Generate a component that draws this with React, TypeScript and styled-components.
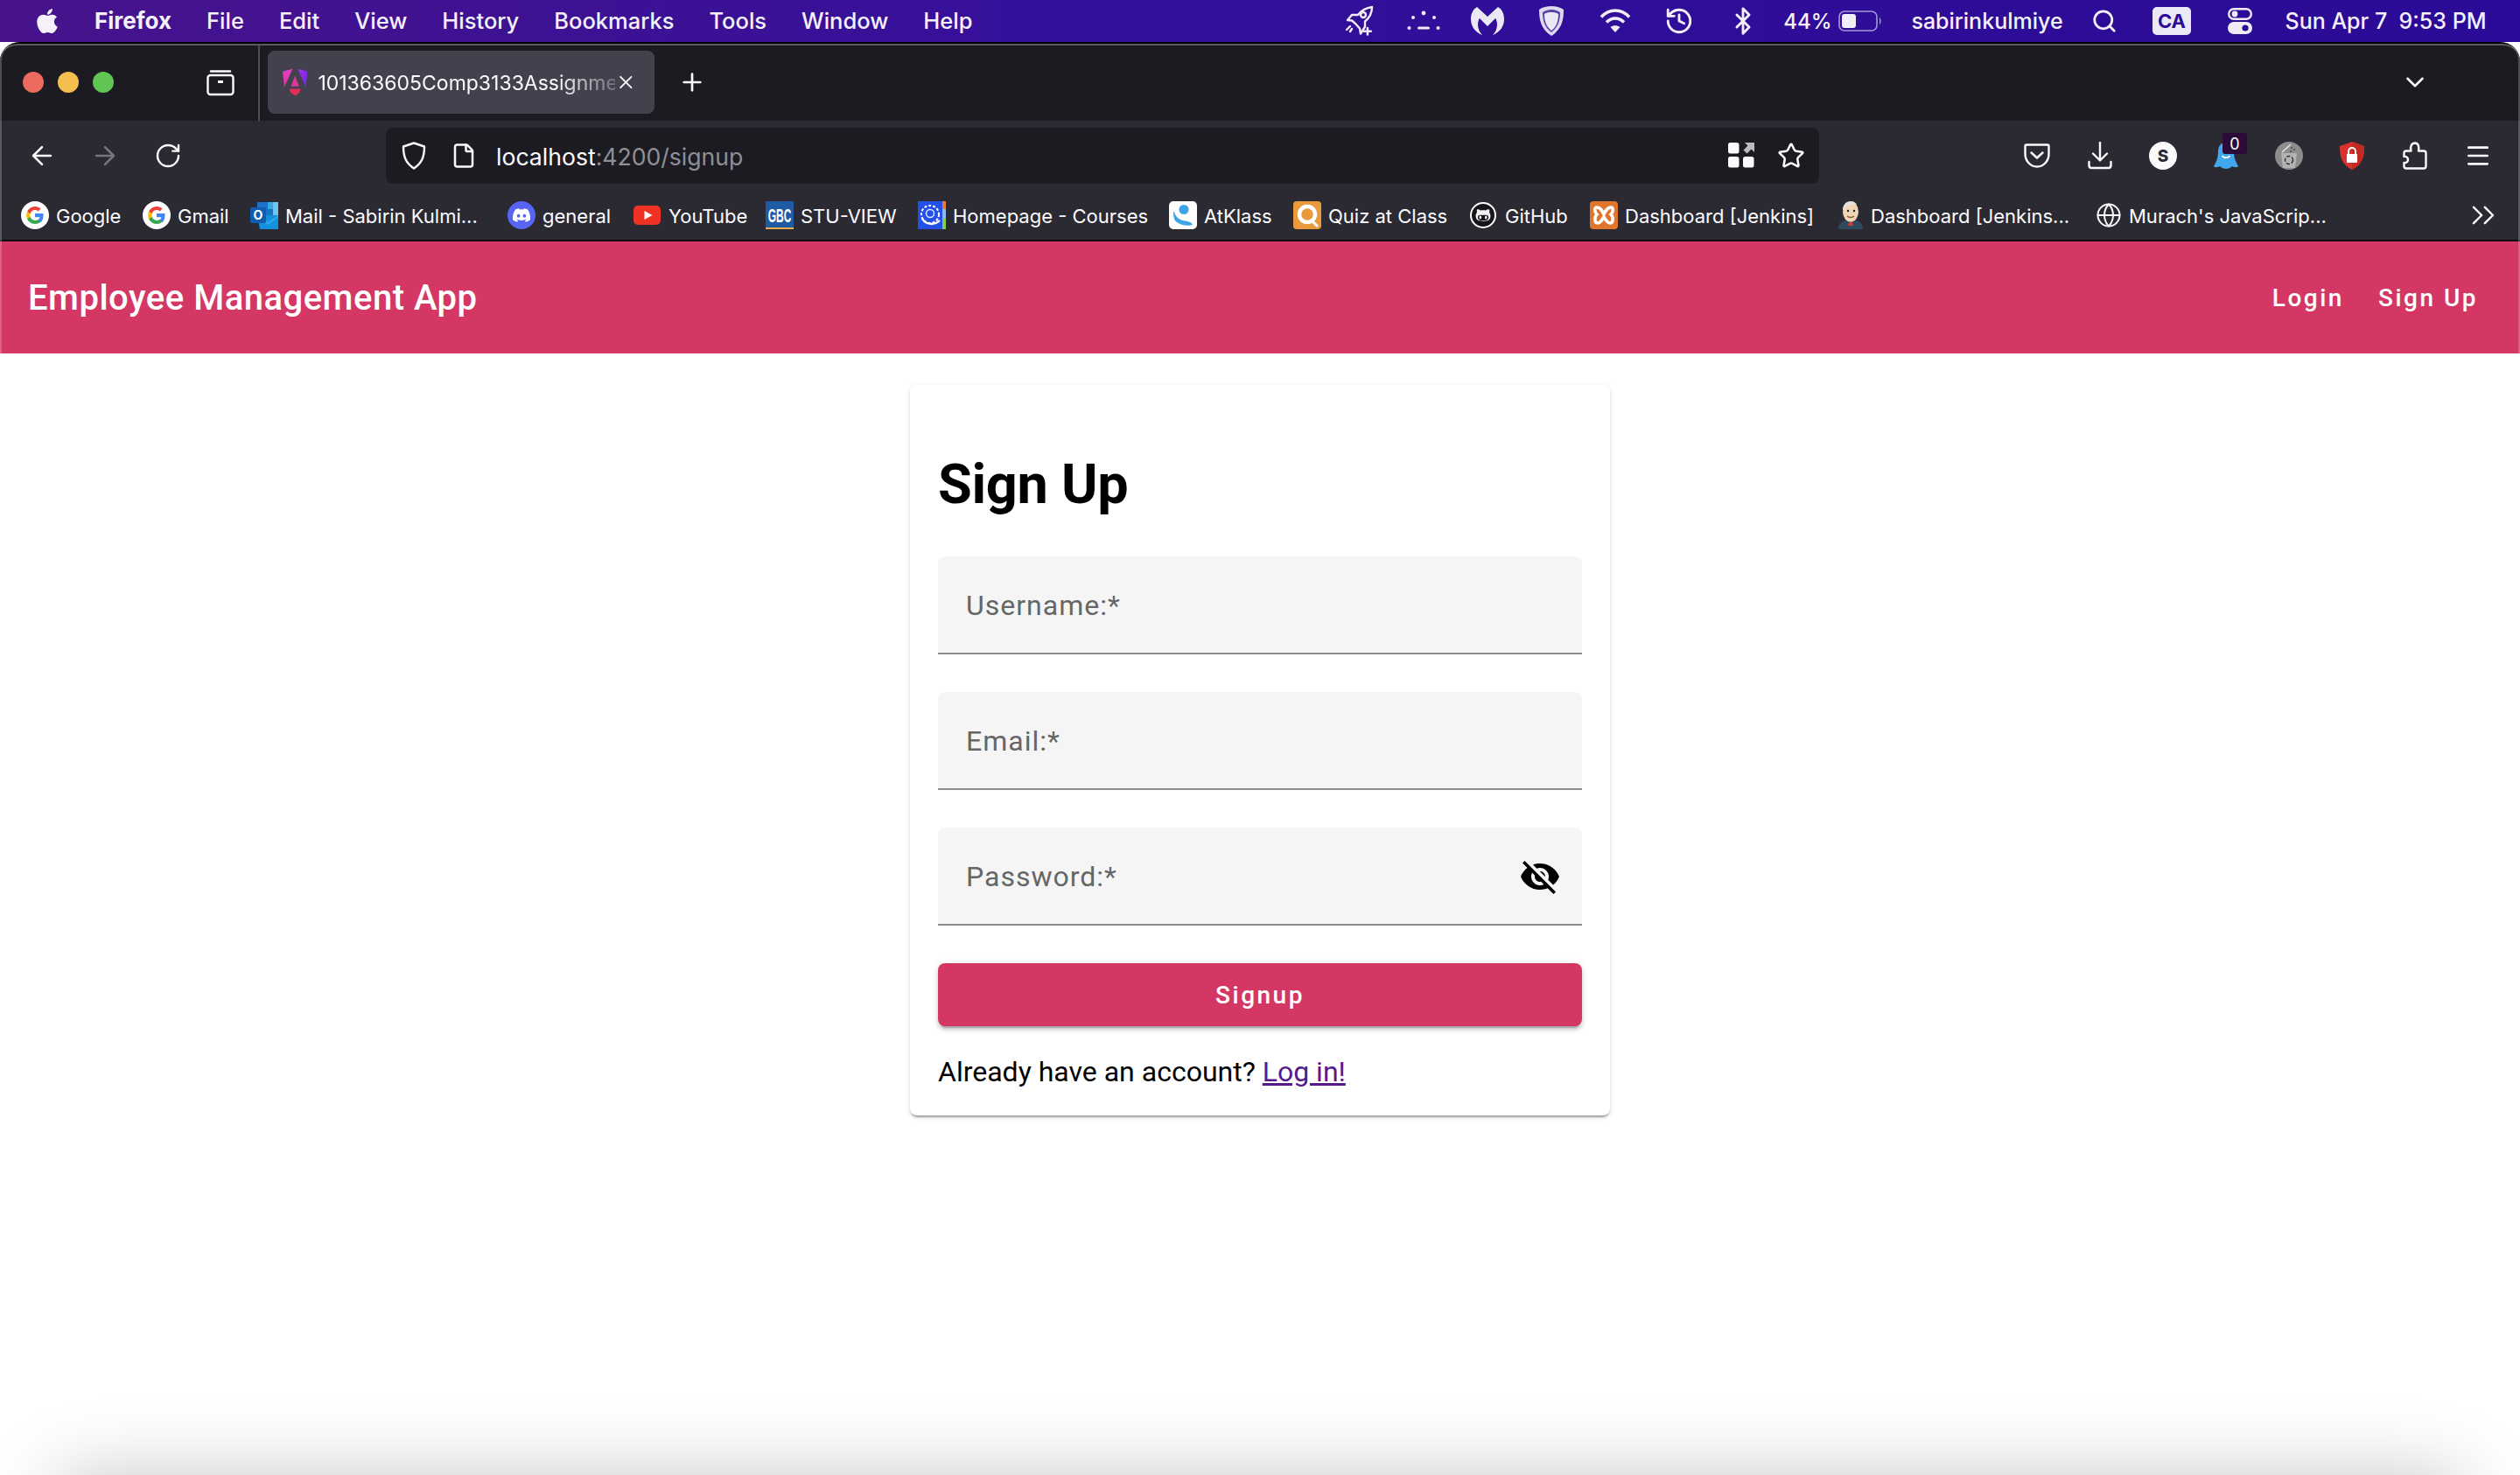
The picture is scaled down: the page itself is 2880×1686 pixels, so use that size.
import React from "react";
import styled, { createGlobalStyle } from "styled-components";
import { FaApple, FaDiscord, FaGithubAlt } from "react-icons/fa";
import {
  ArrowLeft,
  ArrowRight,
  Bluetooth,
  ChevronDown,
  ChevronsRight,
  File,
  Globe,
  History,
  Menu,
  Plus,
  RotateCw,
  Search,
  Star,
  X,
} from "lucide-react";

const GlobalStyle = createGlobalStyle`
  html, body {
    margin: 0;
    padding: 0;
    background: #fff;
  }
  * {
    box-sizing: border-box;
  }
`;

const Screen = styled.div`
  position: relative;
  width: 2880px;
  height: 1686px;
  overflow: hidden;
  background: #fff;
  display: flex;
  flex-direction: column;
  font-family: Inter, "Liberation Sans", sans-serif;
`;

/* ---------- macOS menu bar ---------- */

const MenuBar = styled.div`
  height: 48px;
  flex: none;
  display: flex;
  align-items: center;
  padding: 0 38px 0 38px;
  color: #f4f1fb;
  font-size: 25.5px;
  font-weight: 500;
  background: linear-gradient(90deg, #47138c 0%, #35109a 40%, #2a0a96 100%);
`;

const AppleSlot = styled.div`
  width: 32px;
  height: 34px;
  display: flex;
  align-items: center;
  justify-content: center;
  margin-right: 38px;
`;

const MenuList = styled.div`
  display: flex;
  gap: 40px;
  padding-bottom: 2px;
`;

const MenuItem = styled.span<{ $bold?: boolean }>`
  font-weight: ${({ $bold }) => ($bold ? 700 : 500)};
  font-size: ${({ $bold }) => ($bold ? "26px" : "inherit")};
  white-space: nowrap;
`;

const Tray = styled.div`
  margin-left: auto;
  display: flex;
  align-items: center;
  height: 48px;
`;

const TraySlot = styled.div<{ $w: number; $ml?: number; $size?: number }>`
  width: ${({ $w }) => $w}px;
  margin-left: ${({ $ml }) => $ml ?? 0}px;
  font-size: ${({ $size }) => ($size ? `${$size}px` : "inherit")};
  flex: none;
  display: flex;
  align-items: center;
  justify-content: center;
  white-space: pre;
`;

const CaBadge = styled.div`
  width: 44px;
  height: 32px;
  margin-left: 7px;
  flex: none;
  border-radius: 5px;
  background: #ece9f6;
  color: #2a0a96;
  font-size: 22px;
  font-weight: 700;
  display: flex;
  align-items: center;
  justify-content: center;
`;

/* ---------- browser chrome ---------- */

const Window = styled.div`
  flex: 1;
  min-height: 0;
  display: flex;
  flex-direction: column;
  position: relative;
  background: #000;
  padding-top: 2px;
  border-radius: 22px 22px 0 0;

  &::after {
    content: "";
    position: absolute;
    inset: 2px 0 0 0;
    border-left: 2px solid rgba(255, 255, 255, 0.22);
    border-right: 2px solid rgba(255, 255, 255, 0.22);
    border-radius: 20px 20px 0 0;
    pointer-events: none;
  }
`;

const TitleBar = styled.div`
  height: 88px;
  flex: none;
  display: flex;
  align-items: center;
  padding: 0 84px 2px 26px;
  background: #1c1b22;
  border-top: 2px solid #5c5c60;
  border-radius: 20px 20px 0 0;
  color: #fbfbfe;
`;

const Light = styled.span<{ $color: string }>`
  width: 24px;
  height: 24px;
  border-radius: 50%;
  background: ${({ $color }) => $color};
  margin-right: 16px;
  flex: none;
`;

const ChromeButton = styled.div<{ $ml?: string; $dim?: boolean }>`
  width: 72px;
  height: 64px;
  flex: none;
  margin-left: ${({ $ml }) => $ml ?? "0"};
  display: flex;
  align-items: center;
  justify-content: center;
  position: relative;
  color: ${({ $dim }) => ($dim ? "#77767d" : "#fbfbfe")};
`;

const TabDivider = styled.div`
  width: 2px;
  height: 86px;
  margin: 0 9px 0 7px;
  background: #4e4d54;
  align-self: flex-start;
`;

const Tab = styled.div`
  width: 442px;
  height: 72px;
  flex: none;
  display: flex;
  align-items: center;
  padding: 0 20px 0 17px;
  background: #42414d;
  border-radius: 8px;
`;

const TabTitle = styled.span`
  width: 340px;
  margin-left: 12px;
  padding-top: 2px;
  white-space: nowrap;
  font-size: 23px;
  color: #fbfbfe;
  -webkit-mask-image: linear-gradient(90deg, #000 80%, rgba(0, 0, 0, 0.25) 100%);
  mask-image: linear-gradient(90deg, #000 80%, rgba(0, 0, 0, 0.25) 100%);
`;

const Toolbar = styled.div`
  height: 72px;
  flex: none;
  display: flex;
  align-items: flex-end;
  padding: 0 12px;
  background: #2b2a33;
`;

const AddressBar = styled.div`
  width: 1638px;
  height: 64px;
  margin-left: 213px;
  flex: none;
  display: flex;
  align-items: center;
  padding: 0 16px 0 18px;
  background: #1c1b22;
  border-radius: 8px;
  color: #fbfbfe;
`;

const PageIcon = styled(File)`
  margin-left: 28px;
`;

const BookmarkStar = styled(Star)`
  margin-left: 26px;
`;

const UrlText = styled.span`
  margin-left: 22px;
  padding-top: 1px;
  font-size: 26.6px;
  color: #fbfbfe;
`;

const UrlDim = styled.span`
  color: #8f8f94;
`;

const ToolbarRight = styled.div`
  margin-left: auto;
  display: flex;
`;

const Badge = styled.span`
  position: absolute;
  top: 6px;
  left: 32px;
  width: 28px;
  height: 24px;
  border-radius: 3px;
  background: #2d0b38;
  color: #fff;
  font-size: 18px;
  display: flex;
  align-items: center;
  justify-content: center;
`;

const BookmarksBar = styled.div`
  height: 66px;
  flex: none;
  display: flex;
  align-items: flex-start;
  padding: 20px 0 0 24px;
  background: #2b2a33;
  border-bottom: 2px solid #0c0c0f;
  color: #fbfbfe;
  font-size: 22px;
`;

const Bookmark = styled.div<{ $w: number }>`
  width: ${({ $w }) => $w}px;
  flex: none;
  height: 32px;
  display: flex;
  align-items: center;
  gap: 8px;
  white-space: nowrap;
`;

const BookmarkLabel = styled.span`
  padding-top: 1px;
`;

const BookmarkOverflow = styled.div`
  margin-left: auto;
  margin-right: 20px;
  height: 32px;
  display: flex;
  align-items: center;
`;

/* ---------- the Angular page ---------- */

const Page = styled.div`
  flex: 1;
  min-height: 0;
  background: #fff;
  font-family: Roboto, "Liberation Sans", sans-serif;
`;

const AppNav = styled.header`
  height: 128px;
  display: flex;
  align-items: center;
  padding: 0 48px 0 32px;
  background: #d43763;
  color: #fff;
`;

const Brand = styled.span`
  font-size: 40px;
  font-weight: 500;
  letter-spacing: 0.5px;
`;

const NavLinks = styled.nav`
  margin-left: auto;
  display: flex;
  gap: 39px;
`;

const NavLink = styled.a`
  font-size: 28px;
  font-weight: 500;
  letter-spacing: 2.5px;
`;

const Card = styled.section`
  width: 800px;
  margin: 36px auto 0;
  padding: 32px 32px 31px;
  background: #fff;
  border-radius: 8px;
  box-shadow: 0 4px 2px -2px rgba(0, 0, 0, 0.2), 0 2px 2px 0 rgba(0, 0, 0, 0.14),
    0 2px 6px 0 rgba(0, 0, 0, 0.12);
`;

const Title = styled.h1`
  margin: 0 0 34px;
  padding-top: 34px;
  font-size: 63px;
  line-height: 96px;
  font-weight: 700;
  letter-spacing: -0.3px;
  color: #000;
`;

const Field = styled.div`
  height: 112px;
  margin-bottom: 43px;
  display: flex;
  align-items: center;
  justify-content: space-between;
  padding: 2px 24px 0 32px;
  background: #f5f5f5;
  border-radius: 8px 8px 0 0;
  border-bottom: 2px solid #8c8c8c;
`;

const FieldLabel = styled.label`
  font-size: 32px;
  letter-spacing: 1px;
  color: #666;
`;

const SubmitButton = styled.button`
  display: block;
  width: 100%;
  height: 72px;
  border: 0;
  border-radius: 8px;
  background: #d43763;
  color: #fff;
  font-family: inherit;
  font-size: 28px;
  font-weight: 500;
  letter-spacing: 2.5px;
  box-shadow: 0 6px 2px -4px rgba(0, 0, 0, 0.2), 0 4px 4px 0 rgba(0, 0, 0, 0.14),
    0 2px 10px 0 rgba(0, 0, 0, 0.12);
`;

const Already = styled.p`
  margin: 33px 0 0;
  font-size: 32px;
  color: #000;
`;

const LoginLink = styled.a`
  color: #551a8b;
  text-decoration: underline;
`;

/* soft shadow rising from the foot of the screen */
const FootShadow = styled.div`
  position: absolute;
  left: 66px;
  right: 66px;
  bottom: -300px;
  height: 300px;
  background: #bbb;
  box-shadow: 0 0 80px rgba(0, 0, 0, 0.22);
`;

/* ---------- drawn icons ---------- */

const RocketPlus = () => (
  <svg width="36" height="36" viewBox="0 0 36 36" fill="none" stroke="#efecf8" strokeWidth="2.4" strokeLinejoin="round" strokeLinecap="round">
    <path d="M13 21 9 17.5 4 17l5-6h7c4-5 9-8 16-9 0 7-2.500 12-8 16.500l0 6-5 8-1-6z" />
    <circle cx="22" cy="11" r="3" />
    <path d="M7 24 3 28M9 27l-2 3" />
    <path d="M27 28v8M23 32h8" strokeWidth="2.600" transform="translate(1 -1) scale(.96)" />
  </svg>
);

const DotsFace = () => (
  <svg width="38" height="28" viewBox="0 0 38 28" fill="#efecf8">
    <circle cx="19" cy="5" r="2.400" />
    <circle cx="7" cy="10" r="2" />
    <circle cx="31" cy="10" r="2" />
    <circle cx="2.500" cy="22" r="2" />
    <circle cx="35.500" cy="22" r="2" />
    <rect x="12" y="20.500" width="14" height="3" rx="1.500" />
  </svg>
);

const MalwareM = () => (
  <svg width="38" height="34" viewBox="0 0 38 34" fill="#ebe8f6">
    <path d="M7 1C2 4 0 9 0 15c0 8 5 15 13 18-3-3-5-7-5-12 0-3 1-6 2-7l9 9 9-9c1 1 2 4 2 7 0 5-2 9-5 12 8-3 13-10 13-18 0-6-2-11-7-14L19 12z" />
  </svg>
);

const GuardShield = () => (
  <svg width="28" height="34" viewBox="0 0 28 34">
    <path d="M14 0C9 0 4 1 0 4c0 12 2 22 14 30C26 26 28 16 28 4 24 1 19 0 14 0z" fill="#dcd8ee" />
    <path d="M14 4c-3 0-7 1-10 3 0 9 2 17 10 23 8-6 10-14 10-23-3-2-7-3-10-3z" fill="#5a43a8" />
    <path d="M14 7c-3 0-6 .6-8 2 0 8 2 14 8 19 6-5 8-11 8-19-2-1.400-5-2-8-2z" fill="#ebe8f6" />
  </svg>
);

const WifiIcon = () => (
  <svg width="36" height="28" viewBox="0 0 36 28" fill="none" stroke="#efecf8" strokeWidth="3.600">
    <path d="M2 9.500C11-.5 25-.5 34 9.500" />
    <path d="M8 15.500c6-6 14-6 20 0" />
    <path d="M18 27l-5.500-6c3-2.500 8-2.500 11 0z" fill="#efecf8" stroke="none" />
  </svg>
);

const Battery = () => (
  <svg width="50" height="24" viewBox="0 0 50 24">
    <rect x="1" y="1" width="43" height="22" rx="6" fill="none" stroke="#a59bd6" strokeWidth="1.600" />
    <rect x="4" y="4" width="16" height="16" rx="3" fill="#f1eef9" />
    <path d="M47 8c2 1 2 7 0 8z" fill="#a59bd6" />
  </svg>
);

const ControlCenter = () => (
  <svg width="28" height="30" viewBox="0 0 28 30">
    <rect x="1.200" y="1.200" width="25.600" height="11.600" rx="5.800" fill="none" stroke="#efecf8" strokeWidth="2.400" />
    <circle cx="8" cy="7" r="3.400" fill="#efecf8" />
    <rect x="0" y="16" width="28" height="14" rx="7" fill="#efecf8" />
    <circle cx="20" cy="23" r="3.600" fill="#2a0a96" />
  </svg>
);

const TabManager = () => (
  <svg width="32" height="32" viewBox="0 0 32 32" fill="none" stroke="#fbfbfe" strokeWidth="2.400">
    <rect x="1.500" y="8" width="29" height="22" rx="3" />
    <path d="M5 3.500h22" strokeLinecap="round" />
    <path d="M13 15.500h6" strokeWidth="3" />
  </svg>
);

const AngularLogo = () => (
  <svg width="30" height="32" viewBox="0 0 30 32">
    <defs>
      <linearGradient id="ngLeft" x1="0" y1="0" x2="0" y2="1">
        <stop offset="0" stopColor="#e040c8" />
        <stop offset="1" stopColor="#e0349c" />
      </linearGradient>
      <linearGradient id="ngRight" x1="0" y1="0" x2="1" y2="1">
        <stop offset="0" stopColor="#a030e8" />
        <stop offset="1" stopColor="#6c28e0" />
      </linearGradient>
    </defs>
    <path d="M0 3 12 0 2 22z" fill="url(#ngLeft)" />
    <path d="M30 3 18 0 28 22z" fill="url(#ngRight)" />
    <path d="M15 8l5 13H10z" fill="#d83a9c" />
    <path d="M8 24h14l-2 5-5 3-5-3z" fill="#e22e58" />
  </svg>
);

const ShieldOutline = () => (
  <svg width="28" height="32" viewBox="0 0 28 32" fill="none" stroke="#fbfbfe" strokeWidth="2.400" strokeLinejoin="round">
    <path d="M14 1.500 2 5.500c0 12 3 19 12 25 9-6 12-13 12-25z" />
  </svg>
);

const ContainerGrid = () => (
  <svg width="30" height="30" viewBox="0 0 30 30" fill="#fbfbfe">
    <rect x="0" y="1" width="12.500" height="12.500" rx="2.500" />
    <rect x="0" y="17" width="12.500" height="12.500" rx="2.500" />
    <rect x="17" y="17" width="12.500" height="12.500" rx="2.500" />
    <path d="M19 1h11v11l-3.500-3.500-5 5-4-4 5-5z" opacity="0.72" />
  </svg>
);

const PocketIcon = () => (
  <svg width="30" height="28" viewBox="0 0 30 28" fill="none" stroke="#fbfbfe" strokeWidth="2.400" strokeLinecap="round" strokeLinejoin="round">
    <path d="M3 1.500h24c1 0 1.500.6 1.500 1.500v9c0 8-6 14.500-13.500 14.500S1.500 20 1.500 12V3c0-.9.6-1.500 1.500-1.500z" />
    <path d="M8.500 10.500 15 16.500l6.500-6" />
  </svg>
);

const DownloadIcon = () => (
  <svg width="30" height="32" viewBox="0 0 30 32" fill="none" stroke="#fbfbfe" strokeWidth="2.400" strokeLinecap="round" strokeLinejoin="round">
    <path d="M15 1v20M7 13.500l8 8 8-8" />
    <path d="M2.500 23v4c0 2 1 3 3 3h19c2 0 3-1 3-3v-4" />
  </svg>
);

const SkypeCircle = () => (
  <svg width="32" height="32" viewBox="0 0 32 32">
    <circle cx="16" cy="16" r="16" fill="#fbfbfe" />
    <text x="16" y="22.500" textAnchor="middle" fontFamily="Inter, sans-serif" fontWeight="800" fontSize="19" fill="#2b2a33">S</text>
  </svg>
);

const GhostIcon = () => (
  <svg width="28" height="30" viewBox="0 0 28 30">
    <path d="M14 0C7 0 5 5 5 11c0 6-2 11-5 16 2 2 5 1 7 0 2 2 5 3 7 3s5-1 7-3c2 1 5 2 7 0-3-5-5-10-5-16 0-6-2-11-9-11z" fill="#41a8ee" />
    <path d="M9.500 15c2 3 7 3 9 0" fill="none" stroke="#fff" strokeWidth="1.800" />
  </svg>
);

const BinCircle = () => (
  <svg width="32" height="32" viewBox="0 0 32 32">
    <circle cx="16" cy="16" r="16" fill="#8d8d8d" />
    <path d="M8 12 18 3" stroke="#e8e8e8" strokeWidth="1.500" />
    <circle cx="19" cy="7" r="1" fill="#444" />
    <circle cx="22" cy="9" r="1" fill="#444" />
    <circle cx="18" cy="11" r="1" fill="#444" />
    <path d="M7 13h18l-2 17H9z" fill="#b3b3b3" />
    <circle cx="16" cy="21" r="4.500" fill="none" stroke="#333" strokeWidth="1.500" strokeDasharray="4 2" />
  </svg>
);

const RedShield = () => (
  <svg width="30" height="32" viewBox="0 0 30 32">
    <path d="M15 0 1 5c0 14 3 21 14 27C26 26 29 19 29 5z" fill="#d9322b" />
    <path d="M15 0v32c11-6 14-13 14-27z" fill="#c42a24" />
    <rect x="9" y="14" width="12" height="10" rx="1" fill="#fff" />
    <path d="M11 14v-3a4 4 0 0 1 8 0v3" fill="none" stroke="#fff" strokeWidth="2" />
  </svg>
);

const PuzzleIcon = () => (
  <svg width="28" height="32" viewBox="0 0 28 32" fill="none" stroke="#fbfbfe" strokeWidth="2.400" strokeLinejoin="round">
    <path d="M4 30.500c-1.500 0-2.500-1-2.500-2.500v-4c6 1 6-8 0-7v-4c0-1.500 1-2.500 2.500-2.500h5.500C8 5 10.500 1.500 14 1.500s5 3.500 4 9h6c1.500 0 2.500 1 2.500 2.500v15c0 1.500-1 2.500-2.500 2.500z" />
  </svg>
);

const GoogleG = () => (
  <svg width="32" height="32" viewBox="0 0 32 32">
    <circle cx="16" cy="16" r="16" fill="#fff" />
    <path d="M25.500 16.300c0-.8-.1-1.500-.2-2.200H16v4.200h5.400c-.2 1.300-1 2.400-2.100 3.100v2.700h3.300c2-1.800 3-4.600 2.900-7.800z" fill="#4285f4" />
    <path d="M16 26c2.700 0 5-.9 6.600-2.400l-3.300-2.700c-.9.600-2 1-3.300 1-2.500 0-4.700-1.700-5.400-4.100H7.200v2.800C8.900 23.800 12.200 26 16 26z" fill="#34a853" />
    <path d="M10.600 17.800c-.4-1.200-.4-2.400 0-3.600v-2.800H7.200c-1.400 2.800-1.400 6.400 0 9.200z" fill="#fbbc05" />
    <path d="M16 10c1.400 0 2.700.5 3.700 1.500l2.900-2.900C20.900 7 18.600 6 16 6c-3.800 0-7.100 2.200-8.800 5.400l3.400 2.800c.7-2.400 2.900-4.200 5.400-4.200z" fill="#ea4335" />
  </svg>
);

const OutlookIcon = () => (
  <svg width="32" height="32" viewBox="0 0 32 32">
    <rect x="8" y="1" width="24" height="16" fill="#1a73c8" />
    <rect x="20" y="1" width="6" height="8" fill="#35a8e8" />
    <rect x="26" y="1" width="6" height="16" fill="#6ec6f0" />
    <path d="M8 16h24v16H11z" fill="#1490df" />
    <path d="M8 16l12 8 12-8v3l-12 8-12-8z" fill="#28a8ea" />
    <rect x="0" y="7" width="18" height="18" rx="2" fill="#0f5cb0" />
    <text x="9" y="21" textAnchor="middle" fontFamily="Inter, sans-serif" fontWeight="700" fontSize="14" fill="#fff">O</text>
  </svg>
);

const DiscordBadge = styled.span`
  width: 32px;
  height: 32px;
  flex: none;
  border-radius: 50%;
  background: #5865f2;
  color: #fff;
  display: flex;
  align-items: center;
  justify-content: center;
`;

const YoutubeIcon = () => (
  <svg width="32" height="32" viewBox="0 0 32 32">
    <rect x="0" y="5" width="31" height="22" rx="5" fill="#ee3224" />
    <path d="M12.500 11l9 5-9 5z" fill="#fff" />
  </svg>
);

const GbcIcon = () => (
  <svg width="32" height="32" viewBox="0 0 32 32">
    <rect width="32" height="32" fill="#1f5aa5" />
    <rect x="0" y="30" width="32" height="2" fill="#e8b04a" />
    <text x="16" y="13.400" transform="scale(1 1.800)" textAnchor="middle" fontFamily="Liberation Sans, sans-serif" fontWeight="700" fontSize="12" fill="#fff">GBC</text>
  </svg>
);

const CollegeIcon = () => (
  <svg width="32" height="32" viewBox="0 0 32 32">
    <rect width="32" height="32" fill="#2550e8" />
    <rect x="28" y="0" width="4" height="9" fill="#ec7a30" />
    <rect x="28" y="9" width="4" height="11" fill="#8fb8f0" />
    <rect x="28" y="20" width="4" height="12" fill="#7ed048" />
    <circle cx="14" cy="15" r="10" fill="none" stroke="#fff" strokeWidth="2" strokeDasharray="3 2" />
    <path d="M5 20c4 7 14 8 20 2" fill="none" stroke="#fff" strokeWidth="2.400" />
    <circle cx="14" cy="14" r="4.500" fill="none" stroke="#dfe6ff" strokeWidth="1.500" />
  </svg>
);

const AtKlassIcon = () => (
  <svg width="32" height="32" viewBox="0 0 32 32">
    <rect width="32" height="32" rx="5" fill="#fff" />
    <circle cx="17" cy="9.500" r="5.500" fill="#3fa4e6" />
    <path d="M6 12c2 8 8 10 15 11 3 .5 5 2 6 4-6 2-14 0-18-3-3-2-4-6-4-12z" fill="#3fa4e6" />
  </svg>
);

const QuizIcon = () => (
  <svg width="32" height="32" viewBox="0 0 32 32">
    <rect width="32" height="32" rx="4" fill="#e89a3c" />
    <circle cx="16" cy="15" r="9" fill="#e89a3c" stroke="#fff" strokeWidth="4.500" />
    <path d="M20 21l8 8" stroke="#fff" strokeWidth="3" />
  </svg>
);

const GithubBadge = styled.span`
  width: 30px;
  height: 30px;
  margin-right: 2px;
  flex: none;
  border-radius: 50%;
  background: #16161a;
  border: 2px solid #fff;
  display: flex;
  align-items: center;
  justify-content: center;
  color: #f2f2f2;
`;

const XamppIcon = () => (
  <svg width="32" height="32" viewBox="0 0 32 32">
    <rect width="32" height="32" rx="4" fill="#e0762e" />
    <path d="M8 7c4 0 6 4 8 8 2-4 4-8 8-8 3 0 3 5 0 8 3 3 3 10-1 10-3 0-5-4-7-7-2 3-4 7-7 7-4 0-4-7-1-10-3-3-3-8 0-8z" fill="none" stroke="#fff" strokeWidth="3.600" />
  </svg>
);

const JenkinsIcon = () => (
  <svg width="30" height="32" viewBox="0 0 30 32">
    <path d="M1 32c0-6 3-9 8-10h12c5 1 8 4 8 10z" fill="#2f4a5c" />
    <path d="M13 24h4l1 4h-6z" fill="#d33833" />
    <ellipse cx="15" cy="12" rx="9" ry="11.500" fill="#f0d6b5" />
    <path d="M6 10c0-6 4-10 9-10 4 0 6 2 7 4-5-1-11 0-14 6z" fill="#e6e2da" />
    <circle cx="12" cy="11" r="1.200" fill="#222" />
    <circle cx="19" cy="11" r="1.200" fill="#222" />
    <path d="M11 17c2 2 6 2 8 0" fill="none" stroke="#8b5a3c" strokeWidth="1.400" />
  </svg>
);

const bookmarks: { label: string; w: number; icon: React.ReactNode }[] = [
  { label: "Google", w: 139, icon: <GoogleG /> },
  { label: "Gmail", w: 123, icon: <GoogleG /> },
  { label: "Mail - Sabirin Kulmi...", w: 294, icon: <OutlookIcon /> },
  { label: "general", w: 144, icon: <DiscordBadge><FaDiscord size={22} /></DiscordBadge> },
  { label: "YouTube", w: 151, icon: <YoutubeIcon /> },
  { label: "STU-VIEW", w: 174, icon: <GbcIcon /> },
  { label: "Homepage - Courses", w: 287, icon: <CollegeIcon /> },
  { label: "AtKlass", w: 142, icon: <AtKlassIcon /> },
  { label: "Quiz at Class", w: 202, icon: <QuizIcon /> },
  { label: "GitHub", w: 137, icon: <GithubBadge><FaGithubAlt size={18} /></GithubBadge> },
  { label: "Dashboard [Jenkins]", w: 283, icon: <XamppIcon /> },
  { label: "Dashboard [Jenkins...", w: 295, icon: <JenkinsIcon /> },
  { label: "Murach's JavaScrip...", w: 400, icon: <Globe size={30} strokeWidth={1.6} /> },
];

const VisibilityOff = () => (
  <svg width="48" height="48" viewBox="0 0 24 24" fill="#000">
    <path d="M12 7c2.760 0 5 2.240 5 5 0 .65-.13 1.260-.36 1.830l2.920 2.920c1.510-1.260 2.700-2.890 3.430-4.750-1.730-4.390-6-7.500-11-7.500-1.400 0-2.740.25-3.980.7l2.160 2.160C10.740 7.130 11.350 7 12 7zM2 4.270l2.280 2.280.46.46C3.080 8.300 1.780 10.020 1 12c1.730 4.390 6 7.500 11 7.500 1.550 0 3.030-.3 4.380-.84l.42.42L19.730 22 21 20.730 3.270 3 2 4.270zM7.530 9.800l1.550 1.550c-.05.21-.08.43-.08.65 0 1.660 1.340 3 3 3 .22 0 .44-.03.65-.08l1.550 1.550c-.67.33-1.410.53-2.200.53-2.760 0-5-2.240-5-5 0-.79.2-1.530.53-2.200zm4.310-.78l3.150 3.150.02-.16c0-1.660-1.340-3-3-3l-.17.01z" />
  </svg>
);

const App: React.FC = () => {
  return (
    <Screen>
      <GlobalStyle />
      <MenuBar>
        <AppleSlot>
          <FaApple size={32} color="#f4f1fb" />
        </AppleSlot>
        <MenuList>
          <MenuItem $bold>Firefox</MenuItem>
          <MenuItem>File</MenuItem>
          <MenuItem>Edit</MenuItem>
          <MenuItem>View</MenuItem>
          <MenuItem>History</MenuItem>
          <MenuItem>Bookmarks</MenuItem>
          <MenuItem>Tools</MenuItem>
          <MenuItem>Window</MenuItem>
          <MenuItem>Help</MenuItem>
        </MenuList>
        <Tray>
          <TraySlot $w={73}><RocketPlus /></TraySlot>
          <TraySlot $w={73}><DotsFace /></TraySlot>
          <TraySlot $w={73}><MalwareM /></TraySlot>
          <TraySlot $w={73}><GuardShield /></TraySlot>
          <TraySlot $w={73}><WifiIcon /></TraySlot>
          <TraySlot $w={73}><History size={34} strokeWidth={2} /></TraySlot>
          <TraySlot $w={73}><Bluetooth size={34} strokeWidth={2} /></TraySlot>
          <TraySlot $w={48} $ml={14} $size={24}>44%</TraySlot>
          <TraySlot $w={50} $ml={11}><Battery /></TraySlot>
          <TraySlot $w={172} $ml={34} $size={25}>sabirinkulmiye</TraySlot>
          <TraySlot $w={96}><Search size={30} strokeWidth={2.2} /></TraySlot>
          <CaBadge>CA</CaBadge>
          <TraySlot $w={88} $ml={12}><ControlCenter /></TraySlot>
          <TraySlot $w={231} $ml={7} $size={25}>{"Sun Apr 7  9:53 PM"}</TraySlot>
        </Tray>
      </MenuBar>

      <Window>
        <TitleBar>
          <Light $color="#ec6a5e" />
          <Light $color="#f4bf4f" />
          <Light $color="#61c554" />
          <ChromeButton $ml="70px"><TabManager /></ChromeButton>
          <TabDivider />
          <Tab>
            <AngularLogo />
            <TabTitle>101363605Comp3133Assignme</TabTitle>
            <X size={26} strokeWidth={1.8} />
          </Tab>
          <ChromeButton $ml="7px"><Plus size={32} strokeWidth={2} /></ChromeButton>
          <ChromeButton $ml="auto"><ChevronDown size={34} strokeWidth={1.8} /></ChromeButton>
        </TitleBar>

        <Toolbar>
          <ChromeButton><ArrowLeft size={34} strokeWidth={1.8} /></ChromeButton>
          <ChromeButton $dim><ArrowRight size={34} strokeWidth={1.8} /></ChromeButton>
          <ChromeButton><RotateCw size={32} strokeWidth={1.8} /></ChromeButton>
          <AddressBar>
            <ShieldOutline />
            <PageIcon size={30} strokeWidth={2} />
            <UrlText>localhost<UrlDim>:4200/signup</UrlDim></UrlText>
            <ToolbarRight>
              <ContainerGrid />
              <BookmarkStar size={32} strokeWidth={1.9} />
            </ToolbarRight>
          </AddressBar>
          <ToolbarRight>
            <ChromeButton><PocketIcon /></ChromeButton>
            <ChromeButton><DownloadIcon /></ChromeButton>
            <ChromeButton><SkypeCircle /></ChromeButton>
            <ChromeButton><GhostIcon /><Badge>0</Badge></ChromeButton>
            <ChromeButton><BinCircle /></ChromeButton>
            <ChromeButton><RedShield /></ChromeButton>
            <ChromeButton><PuzzleIcon /></ChromeButton>
            <ChromeButton><Menu size={32} strokeWidth={2} /></ChromeButton>
          </ToolbarRight>
        </Toolbar>

        <BookmarksBar>
          {bookmarks.map((b) => (
            <Bookmark key={b.label} $w={b.w}>
              {b.icon}
              <BookmarkLabel>{b.label}</BookmarkLabel>
            </Bookmark>
          ))}
          <BookmarkOverflow>
            <ChevronsRight size={44} strokeWidth={1.3} />
          </BookmarkOverflow>
        </BookmarksBar>

        <Page>
          <AppNav>
            <Brand>Employee Management App</Brand>
            <NavLinks>
              <NavLink>Login</NavLink>
              <NavLink>Sign Up</NavLink>
            </NavLinks>
          </AppNav>
          <Card>
            <Title>Sign Up</Title>
            <Field><FieldLabel>Username:*</FieldLabel></Field>
            <Field><FieldLabel>Email:*</FieldLabel></Field>
            <Field>
              <FieldLabel>Password:*</FieldLabel>
              <VisibilityOff />
            </Field>
            <SubmitButton>Signup</SubmitButton>
            <Already>
              Already have an account? <LoginLink href="#">Log in!</LoginLink>
            </Already>
          </Card>
        </Page>
      </Window>
      <FootShadow />
    </Screen>
  );
};

export default App;
